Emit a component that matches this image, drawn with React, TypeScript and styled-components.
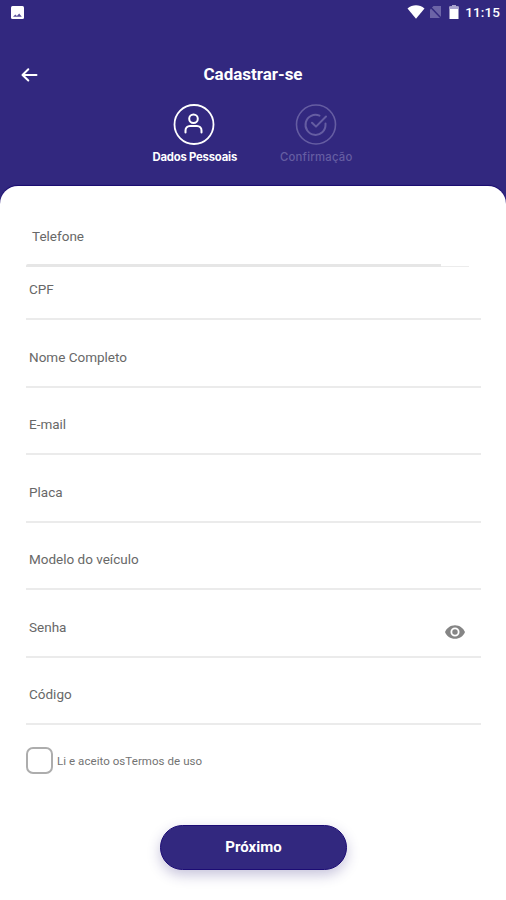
import React from "react";
import styled, { createGlobalStyle } from "styled-components";

const GlobalStyle = createGlobalStyle`
  * { box-sizing: border-box; }
  body {
    margin: 0;
    background: #32287f;
    font-family: Roboto, "Liberation Sans", sans-serif;
  }
`;

const Screen = styled.main`
  width: 506px;
  height: 900px;
  display: flex;
  flex-direction: column;
  overflow: hidden;
  background: #32287f;
`;

const StatusBar = styled.div`
  height: 24px;
  flex: none;
  display: flex;
  align-items: center;
  justify-content: space-between;
  padding: 0 6px 0 11px;
  color: #fff;
`;

const StatusIcons = styled.div`
  display: flex;
  align-items: center;
`;

const SimSlot = styled.span`
  display: flex;
  margin: 0 7px 0 4px;
`;

const Clock = styled.span`
  margin-left: 6px;
  font-size: 13.5px;
  line-height: 24px;
  font-weight: 500;
  letter-spacing: 0.1px;
`;

const TitleBar = styled.header`
  height: 36px;
  flex: none;
  margin-top: 32px;
  display: grid;
  grid-template-columns: 60px 1fr 60px;
  align-items: center;
`;

const BackButton = styled.button`
  width: 20px;
  height: 20px;
  margin: 2px 0 0 20px;
  padding: 0;
  border: 0;
  background: none;
  color: #fff;
  display: flex;
`;

const Title = styled.h1`
  margin: 0;
  text-align: center;
  color: #fff;
  font-size: 17px;
  line-height: 35px;
  font-weight: 700;
  letter-spacing: -0.02px;
`;

const Steps = styled.ol`
  list-style: none;
  margin: 12px 0 0 4px;
  padding: 0;
  height: 81px;
  flex: none;
  display: flex;
  justify-content: center;
`;

const Step = styled.li<{ $active?: boolean }>`
  width: 121.5px;
  display: flex;
  flex-direction: column;
  align-items: center;
  color: ${(p) => (p.$active ? "#fff" : "#655da2")};
`;

const StepLabel = styled.span<{ $bold?: boolean }>`
  margin-top: 2px;
  padding-left: 1px;
  font-family: Inter, Roboto, sans-serif;
  font-size: 11.3px;
  line-height: 18px;
  font-weight: ${(p) => (p.$bold ? 700 : 500)};
  letter-spacing: ${(p) => (p.$bold ? "-0.2px" : "0.25px")};
  white-space: nowrap;
`;

const Card = styled.form`
  flex: 1;
  margin-top: 1px;
  background: #fff;
  border-radius: 18px 18px 0 0;
  box-shadow: 0 -1px 1px #190a70;
  display: flex;
  flex-direction: column;
  padding: 32px 26px 0;
`;

const FieldText = styled.label<{ $indent?: boolean }>`
  padding-left: ${(p) => (p.$indent ? 6 : 3)}px;
  font-size: 13.5px;
  line-height: 36px;
  color: #686868;
  letter-spacing: 0;
`;

const PhoneField = styled.div`
  height: 49px;
  width: 443px;
  flex: none;
  display: flex;
  flex-direction: column;
  justify-content: space-between;
`;

const PhoneRule = styled.div`
  display: flex;
  align-items: flex-end;
  height: 3px;

  &::before {
    content: "";
    width: 415px;
    height: 3px;
    background: #e6e6e6;
    border-radius: 2px 0 0 0;
  }
  &::after {
    content: "";
    width: 28px;
    height: 1px;
    background: #ececec;
  }
`;

const Fields = styled.div`
  margin-top: -14.5px;
  width: 455px;
`;

const Field = styled.div`
  height: 67.5px;
  flex: none;
  display: flex;
  align-items: center;
  justify-content: space-between;
  padding-top: 8px;
  border-bottom: 2px solid #ebebeb;
`;

const EyeButton = styled.button`
  margin: 11px 16px 0 0;
  padding: 0;
  border: 0;
  background: none;
  color: #858585;
  display: flex;
`;

const Terms = styled.label`
  margin-top: 22px;
  display: flex;
  align-items: center;
  font-size: 11.5px;
  color: #737373;
  letter-spacing: 0.06px;
`;

const CheckBox = styled.input`
  appearance: none;
  width: 27px;
  height: 27px;
  margin: 0 4px 0 0;
  border: 2px solid #adadad;
  border-radius: 7px;
  background: #fff;
`;

const NextButton = styled.button`
  align-self: center;
  width: 187px;
  height: 45px;
  margin: 50.5px 0 0 1px;
  padding: 0;
  border: 1px solid #1c0c75;
  border-radius: 23px;
  background: #32287f;
  color: #fff;
  font-family: Roboto, sans-serif;
  font-size: 15px;
  font-weight: 700;
  box-shadow: 0 5px 13px rgba(50, 40, 127, 0.28);
`;

const fields = ["CPF", "Nome Completo", "E-mail", "Placa", "Modelo do veículo", "Senha", "Código"];

const PictureIcon = () => (
  <svg width="13" height="13" viewBox="0 0 13 13">
    <rect width="13" height="13" rx="1.5" fill="#fff" />
    <path d="M2 10.8 4.3 8.6l1.6 1.3L8.2 7.4l2.6 3.4z" fill="#5a529a" />
  </svg>
);

const WifiIcon = () => (
  <svg width="18" height="14" viewBox="0 0 18 14">
    <path d="M.5 3.4C5.5-.7 12.5-.7 17.5 3.4L9 13.7z" fill="currentColor" />
  </svg>
);

const NoSimIcon = () => (
  <svg width="13" height="14" viewBox="0 0 13 14">
    <path d="M4.5 1H12v12H1V4.5z" fill="#6c64a7" />
    <path d="M1 1.5 12 13" stroke="#32287f" strokeWidth="1.5" />
  </svg>
);

const BatteryIcon = () => (
  <svg width="10" height="14" viewBox="0 0 10 14">
    <path d="M3 0h4v1.5h2.5V14h-9V1.5H3z" fill="#fff" />
    <path d="M.5 1.5H3V0h4v1.5h2.5V4h-9z" fill="#aaa4cf" />
  </svg>
);

const BackIcon = () => (
  <svg width="20" height="20" viewBox="0 0 20 20" fill="none" stroke="currentColor" strokeWidth="2" strokeLinecap="round" strokeLinejoin="round">
    <path d="M16.5 10H2.8M8.3 4.3 2.5 10l5.8 5.5" />
  </svg>
);

const PersonIcon = () => (
  <svg width="42" height="42" viewBox="0 0 42 42" fill="none" stroke="currentColor" strokeWidth="2" strokeLinecap="round">
    <circle cx="21" cy="20.5" r="19.5" strokeWidth="1.8" />
    <circle cx="20.5" cy="14.7" r="4.3" />
    <path d="M12.500 28.500V26.500a4.500 4.500 0 0 1 4.500-4.500h7a4.500 4.500 0 0 1 4.500 4.500v2" />
  </svg>
);

const CheckIcon = () => (
  <svg width="42" height="42" viewBox="0 0 42 42" fill="none" stroke="currentColor" strokeWidth="2" strokeLinecap="round" strokeLinejoin="round">
    <circle cx="21" cy="20.5" r="19.5" strokeWidth="1.6" />
    <path d="M30.500 19.500v1a10 10 0 1 1-6-8.800" />
    <path d="m17 18.800 4 3.800L31 12.500" />
  </svg>
);

const EyeIcon = () => (
  <svg width="20" height="14" viewBox="0 0 22 15" fill="currentColor" fillRule="evenodd">
    <path d="M11 0C6 0 1.700 3.100 0 7.500 1.700 11.900 6 15 11 15s9.300-3.100 11-7.500C20.300 3.100 16 0 11 0zm0 12.500a5 5 0 1 1 0-10 5 5 0 0 1 0 10zm0-8a3 3 0 1 0 0 6 3 3 0 0 0 0-6z" />
  </svg>
);

export default function App() {
  return (
    <>
      <GlobalStyle />
      <Screen>
        <StatusBar>
          <PictureIcon />
          <StatusIcons>
            <WifiIcon />
            <SimSlot><NoSimIcon /></SimSlot>
            <BatteryIcon />
            <Clock>11:15</Clock>
          </StatusIcons>
        </StatusBar>
        <TitleBar>
          <BackButton type="button" aria-label="Voltar"><BackIcon /></BackButton>
          <Title>Cadastrar-se</Title>
        </TitleBar>
        <Steps>
          <Step $active><PersonIcon /><StepLabel $bold>Dados Pessoais</StepLabel></Step>
          <Step><CheckIcon /><StepLabel>Confirmação</StepLabel></Step>
        </Steps>
        <Card>
          <PhoneField>
            <FieldText $indent>Telefone</FieldText>
            <PhoneRule />
          </PhoneField>
          <Fields>
            {fields.map((name) => (
              <Field key={name}>
                <FieldText>{name}</FieldText>
                {name === "Senha" && (
                  <EyeButton type="button" aria-label="Mostrar senha"><EyeIcon /></EyeButton>
                )}
              </Field>
            ))}
          </Fields>
          <Terms>
            <CheckBox type="checkbox" />
            <span>Li e aceito osTermos de uso</span>
          </Terms>
          <NextButton type="button">Próximo</NextButton>
        </Card>
      </Screen>
    </>
  );
}
